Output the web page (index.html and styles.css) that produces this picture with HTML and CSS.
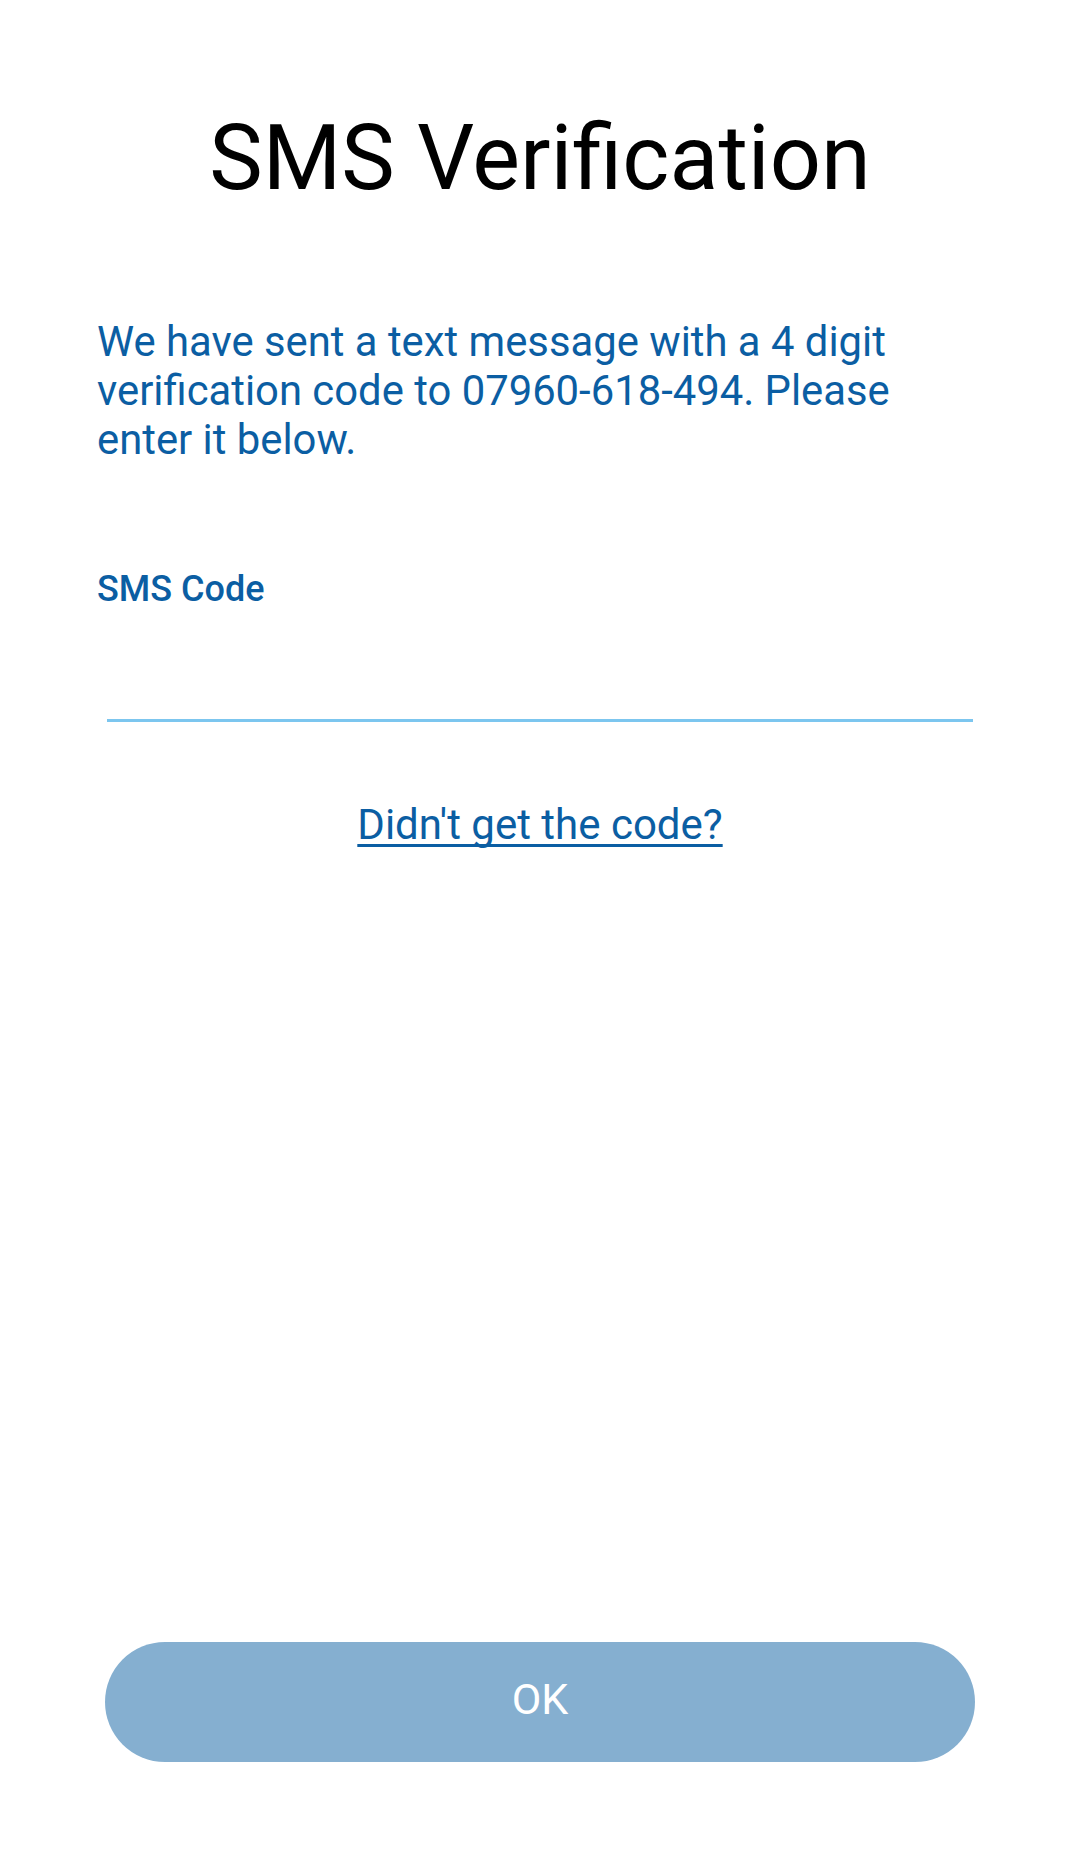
FILE: index.html
```html
<!DOCTYPE html>
<html lang="en">
<head>
<meta charset="utf-8">
<title>SMS Verification</title>
<link rel="stylesheet" href="styles.css">
</head>
<body>
<main class="screen">
  <h1 class="title">SMS Verification</h1>
  <p class="intro">We have sent a text message with a 4 digit verification code to 07960-618-494. Please enter it below.</p>
  <label class="field-label" for="code">SMS Code</label>
  <input class="field-input" id="code" type="text" inputmode="numeric">
  <a class="resend" href="#">Didn't get the code?</a>
  <button class="ok-btn" type="button">OK</button>
</main>
</body>
</html>
```
FILE: styles.css
```css
* { box-sizing: border-box; }
html, body {
  margin: 0;
  padding: 0;
  background: #ffffff;
}
body {
  font-family: Roboto, "Liberation Sans", sans-serif;
}
.screen {
  min-height: 1857px;
  display: flex;
  flex-direction: column;
  padding: 105px 97px 95px;
}
.title {
  margin: 0;
  font-size: 90px;
  font-weight: 400;
  line-height: 1.2;
  color: #000000;
  text-align: center;
}
.intro {
  margin: 104px 0 0;
  font-size: 41.8px;
  line-height: 49px;
  color: #0b5ea3;
}
.field-label {
  margin-top: 104px;
  font-size: 36px;
  font-weight: 500;
  line-height: 1.2;
  color: #0b5ea3;
}
.field-input {
  margin: 0 10px;
  height: 111px;
  border: none;
  border-bottom: 3px solid #7cc6ef;
  background: transparent;
  outline: none;
  font: inherit;
  font-size: 38px;
}
.resend {
  align-self: center;
  margin-top: 78px;
  font-size: 42px;
  line-height: 1.2;
  color: #0b5ea3;
  text-decoration: underline;
  text-decoration-thickness: 3px;
  text-underline-offset: 5px;
  text-decoration-skip-ink: none;
}
.ok-btn {
  margin: auto 8px 0;
  height: 120px;
  padding: 0 0 6px;
  border: none;
  border-radius: 60px;
  background: #85afd0;
  color: #ffffff;
  font-family: Roboto, "Liberation Sans", sans-serif;
  font-size: 43px;
  font-weight: 400;
}
```
